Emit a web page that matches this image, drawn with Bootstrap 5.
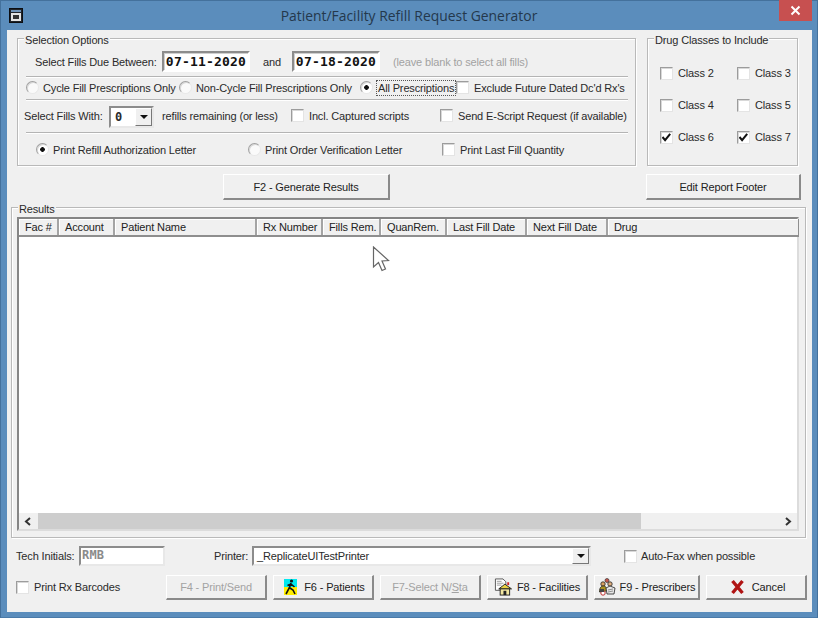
<!DOCTYPE html>
<html lang="en">
<head>
<meta charset="utf-8">
<title>Patient/Facility Refill Request Generator</title>
<link rel="stylesheet" href="https://cdn.jsdelivr.net/npm/bootstrap@5.3.0/dist/css/bootstrap.min.css">
<style>
html,body{margin:0;height:618px;overflow:hidden;background:#5b8dbc}
body{font-family:"Liberation Sans",Arial,sans-serif;font-size:11px;letter-spacing:-.15px;line-height:14px;color:#2a2a2a}
.win{width:818px;height:618px;border:1px solid #44719c;border-bottom-color:#4a7aa8;background:#5b8dbc}
.tbar{height:29px;position:relative;padding-left:8px}
.wicon{margin-top:7px}
.ttl{flex:1;text-align:center;font-family:"Open Sans","Noto Sans",sans-serif;font-size:13.9px;letter-spacing:0;line-height:30px;color:#24384c;padding-right:22px}
.closex{position:absolute;right:5px;top:-1px;width:33px;height:21px;background:#c75050;color:#fff;display:flex;align-items:center;justify-content:center}
.client{margin:0 5px 0 6px;height:582px;background:#f0f0f0;position:relative}
.toprow{padding:8px 0 0 10px;gap:11px}
.grp{border:1px solid #b9b9b9;box-shadow:inset 1px 1px 0 #fff,1px 1px 0 #fff;position:relative}
.grp-t{position:absolute;left:6px;top:-5px;background:#f0f0f0;padding:0 1px;line-height:13px;white-space:nowrap}
.sel{width:619px;height:128px;padding:12px 8px 0 8px}
.drug{width:151px;height:128px;padding:27px 0 0 12px}
.sline{height:21px}
.rw{white-space:nowrap}
.rw>span{flex:none}
.up1{padding-bottom:2px}
.sep{height:2px;border-top:1px solid #b4b4b4;border-bottom:1px solid #fff;width:602px}
.dt{width:88px;height:21px;background:#fff;border:2px solid;border-color:#8c8c8c #fff #fff #8c8c8c;font:700 13px/17px "DejaVu Sans Mono",monospace;color:#111;text-align:center;letter-spacing:.2px;box-shadow:inset 1px 1px 0 #cfcfcf}
.muted-h{color:#a2a2a2}
.form-check-input.wc{appearance:none;width:13px;height:13px;margin:0;flex:none;float:none;background:#fff;border:1px solid;border-color:#9c9c9c #e4e4e4 #e4e4e4 #9c9c9c;border-radius:0;box-shadow:inset 1px 1px 0 #d8d8d8}
.form-check-input.wr{border-radius:50%;background:#fafafa;border-color:#a0a0a0 #e8e8e8 #e8e8e8 #a0a0a0}
.form-check-input.wr:checked{background:radial-gradient(circle at center,#111 0,#111 2px,#fff 2.6px);border-color:#a0a0a0 #e8e8e8 #e8e8e8 #a0a0a0}
.form-check-input.wc:not(.wr):checked{background:#fff url("data:image/svg+xml,%3Csvg xmlns='http://www.w3.org/2000/svg' viewBox='0 0 13 13'%3E%3Cpath d='M2.5 6l2.6 3.2L10.2 2.8' fill='none' stroke='%23111' stroke-width='2'/%3E%3C/svg%3E") center/13px 13px no-repeat;border-color:#9c9c9c #e4e4e4 #e4e4e4 #9c9c9c}
.form-check-input.wc:focus{box-shadow:none}
.lab{display:flex;align-items:center;gap:5px;white-space:nowrap;flex:none}
.lab.rd{gap:4px}
.focus-box{outline:1px dotted #555;outline-offset:0;padding:0 1px}
.combo{height:22px;background:#fff;border:2px solid;border-color:#8c8c8c #e8e8e8 #e8e8e8 #8c8c8c;display:flex;align-items:center}
.combo b{font:700 12px/16px "DejaVu Sans Mono",monospace;flex:1;padding-left:4px}
.cbtn{width:17px;height:100%;background:#f0f0f0;border:1px solid;border-color:#fff #777 #777 #fff;display:flex;align-items:center;justify-content:center;flex:none}
.cbtn i{width:0;height:0;border:4px solid transparent;border-top:4px solid #111;border-bottom:0}
.btn.wb{--bs-btn-padding-x:0;--bs-btn-padding-y:0;--bs-btn-font-size:11px;--bs-btn-line-height:14px;--bs-btn-color:#222;--bs-btn-bg:#f0f0f0;--bs-btn-border-radius:0;--bs-btn-disabled-color:#a3a3a3;--bs-btn-disabled-bg:#f0f0f0;--bs-btn-disabled-opacity:1;background:#f0f0f0;color:#222;border:0;border-top:1px solid #fff;border-left:1px solid #fff;border-right:2px solid #8a8a8a;border-bottom:2px solid #8a8a8a;display:flex;align-items:center;justify-content:center;gap:5px;white-space:nowrap;font-family:inherit;letter-spacing:-.15px}
.btn.wb:disabled{color:#a3a3a3;background:#f0f0f0;border-top-color:#fff;border-left-color:#fff;border-right-color:#8a8a8a;border-bottom-color:#8a8a8a}
.actrow{height:26px;margin-top:8px}
.res{margin:7px 0 0 4px;width:795px;height:331px;padding:9px 5px 0 5px}
.lv{height:314px;width:782px;background:#fff;border:2px solid;border-color:#858585 #dcdcdc #dcdcdc #858585;display:flex;flex-direction:column;position:relative}
.table.lvt{table-layout:fixed;width:780px;margin:0;--bs-table-bg:#f0f0f0;--bs-table-color:#222}
.lvt th{font-weight:400;height:16px;padding:1px 0 0 6px;font-size:11px;line-height:15px;background:#f0f0f0;border:0;border-right:2px solid #a4a4a4;border-bottom:2px solid #8e8e8e;box-shadow:inset 1px 1px 0 #fff;white-space:nowrap;overflow:hidden;vertical-align:middle}
.lvt th:last-child{border-right:1px solid #8e8e8e}
.lvb{flex:1}
.hsb{height:16px;background:#f0f0f0;display:flex;align-items:center;flex:none}
.hsb .thumb{height:16px;width:603px;background:#cdcdcd;margin-left:1px}
.arr{width:18px;height:16px;display:flex;align-items:center;justify-content:center;flex:none}
.cur{position:absolute;left:353px;top:27px}
.frow1{height:20px;margin-top:8px;padding-left:9px}
.txt{width:86px;height:20px;background:#fff;border:2px solid;border-color:#8c8c8c #e8e8e8 #e8e8e8 #8c8c8c;padding-left:1px;color:#8b8b8b;font:700 12px/15px "DejaVu Sans Mono",monospace;letter-spacing:.2px}
.frow2{height:25px;margin-top:9px;padding-left:9px;gap:6px}
.fb{width:101px;height:25px}
</style>
</head>
<body>
<div class="win d-flex flex-column">
  <div class="tbar d-flex">
    <svg class="wicon" width="14" height="15" viewBox="0 0 14 15"><rect x=".5" y=".5" width="13" height="14" fill="#20242a" stroke="#0c0e12"/><rect x="2" y="2" width="10" height="2" fill="#6f93b8"/><rect x="2" y="5" width="10" height="8" fill="#e4e4e4"/><rect x="4" y="7" width="6" height="4" fill="#333"/></svg>
    <div class="ttl">Patient/Facility Refill Request Generator</div>
    <div class="closex"><svg width="11" height="11" viewBox="0 0 11 11"><path d="M1.5 1.5l8 8M9.5 1.5l-8 8" stroke="#fff" stroke-width="2"/></svg></div>
  </div>
  <div class="client">
    <div class="d-flex toprow">
      <div class="grp sel">
        <span class="grp-t">Selection Options</span>
        <div class="d-flex align-items-center sline rw">
          <span style="margin-left:9px;width:122px">Select Fills Due Between:</span>
          <span class="dt" style="margin-left:5px">07-11-2020</span>
          <span style="margin-left:13px;width:29px">and</span>
          <span class="dt">07-18-2020</span>
          <span class="muted-h" style="margin-left:13px">(leave blank to select all fills)</span>
        </div>
        <div class="sep mt-1"></div>
        <div class="d-flex align-items-center rw up1" style="height:21px">
          <label class="lab rd" style="width:153px"><input class="form-check-input wc wr" type="radio" name="a">Cycle Fill Prescriptions Only</label>
          <label class="lab rd" style="width:181px"><input class="form-check-input wc wr" type="radio" name="a">Non-Cycle Fill Prescriptions Only</label>
          <label class="lab rd" style="width:96px"><input class="form-check-input wc wr" type="radio" name="a" checked><span class="focus-box">All Prescriptions</span></label>
          <label class="lab"><input class="form-check-input wc" type="checkbox">Exclude Future Dated Dc'd Rx's</label>
        </div>
        <div class="sep"></div>
        <div class="d-flex align-items-center rw up1" style="height:31px">
          <span style="margin-left:-2px;width:85px">Select Fills With:</span>
          <span class="combo" style="width:45px;margin-top:2px"><b>0</b><span class="cbtn"><i></i></span></span>
          <span style="margin-left:8px;width:129px">refills remaining (or less)</span>
          <label class="lab" style="width:149px"><input class="form-check-input wc" type="checkbox">Incl. Captured scripts</label>
          <label class="lab"><input class="form-check-input wc" type="checkbox">Send E-Script Request (if available)</label>
        </div>
        <div class="sep"></div>
        <div class="d-flex align-items-center rw up1" style="height:33px">
          <label class="lab rd" style="width:212px;margin-left:10px"><input class="form-check-input wc wr" type="radio" name="b" checked>Print Refill Authorization Letter</label>
          <label class="lab rd" style="width:194px"><input class="form-check-input wc wr" type="radio" name="b">Print Order Verification Letter</label>
          <label class="lab"><input class="form-check-input wc" type="checkbox">Print Last Fill Quantity</label>
        </div>
      </div>
      <div class="grp drug">
        <span class="grp-t">Drug Classes to Include</span>
        <div class="row g-0" style="row-gap:18px;width:132px">
          <div class="col-7"><label class="lab"><input class="form-check-input wc" type="checkbox">Class 2</label></div>
          <div class="col-5"><label class="lab"><input class="form-check-input wc" type="checkbox">Class 3</label></div>
          <div class="col-7"><label class="lab"><input class="form-check-input wc" type="checkbox">Class 4</label></div>
          <div class="col-5"><label class="lab"><input class="form-check-input wc" type="checkbox">Class 5</label></div>
          <div class="col-7"><label class="lab"><input class="form-check-input wc" type="checkbox" checked>Class 6</label></div>
          <div class="col-5"><label class="lab"><input class="form-check-input wc" type="checkbox" checked>Class 7</label></div>
        </div>
      </div>
    </div>
    <div class="d-flex actrow">
      <button class="btn wb" style="width:167px;margin-left:216px">F2 - Generate Results</button>
      <button class="btn wb" style="width:155px;margin-left:256px">Edit Report Footer</button>
    </div>
    <div class="grp res">
      <span class="grp-t">Results</span>
      <div class="lv">
        <table class="table lvt">
          <colgroup><col style="width:39px"><col style="width:56px"><col style="width:142px"><col style="width:66px"><col style="width:58px"><col style="width:66px"><col style="width:80px"><col style="width:81px"><col></colgroup>
          <thead><tr><th>Fac #</th><th>Account</th><th>Patient Name</th><th>Rx Number</th><th>Fills Rem.</th><th>QuanRem.</th><th>Last Fill Date</th><th>Next Fill Date</th><th>Drug</th></tr></thead>
        </table>
        <div class="lvb"></div>
        <div class="hsb">
          <span class="arr"><svg width="8" height="9" viewBox="0 0 8 9"><path d="M6 1L2 4.5 6 8" fill="none" stroke="#333" stroke-width="2"/></svg></span>
          <span class="thumb"></span>
          <span class="flex-grow-1"></span>
          <span class="arr"><svg width="8" height="9" viewBox="0 0 8 9"><path d="M2 1l4 3.5L2 8" fill="none" stroke="#333" stroke-width="2"/></svg></span>
        </div>
        <svg class="cur" width="18" height="26" viewBox="0 0 18 26"><path d="M1.5 1v20l5-4.5 3.5 8 3.5-1.5-3.5-8 6.5-.5z" fill="#fff" stroke="#666" stroke-width="1.2"/></svg>
      </div>
    </div>
    <div class="d-flex align-items-center frow1 rw">
      <span style="width:63px">Tech Initials:</span>
      <span class="txt">RMB</span>
      <span style="margin-left:49px;width:38px">Printer:</span>
      <span class="combo" style="width:339px;height:20px;padding-left:3px"><span class="flex-grow-1">_ReplicateUITestPrinter</span><span class="cbtn"><i></i></span></span>
      <label class="lab" style="margin-left:33px;gap:4px"><input class="form-check-input wc" type="checkbox">Auto-Fax when possible</label>
    </div>
    <div class="d-flex align-items-center frow2 rw">
      <label class="lab up1" style="width:144px;padding-bottom:1px"><input class="form-check-input wc" type="checkbox">Print Rx Barcodes</label>
      <button class="btn wb fb" disabled>F4 - Print/Send</button>
      <button class="btn wb fb" style="gap:7px;padding-left:3px"><svg width="13" height="16" viewBox="0 0 13 16"><rect width="13" height="8" fill="#00e8f0"/><rect y="8" width="13" height="8" fill="#ffee00"/><circle cx="7.5" cy="2" r="1.6" fill="#111"/><path d="M7 4L5.500 8.500 2 15M6 9l3 2 2 4M7 5L3.500 6.500M7 5l3.500 3" fill="none" stroke="#111" stroke-width="1.6"/></svg>F6 - Patients</button>
      <button class="btn wb fb" disabled><span>F7-Select N/<u>S</u>ta</span></button>
      <button class="btn wb fb"><svg width="18" height="18" viewBox="0 0 19 18"><path d="M1.500.5h8l3 3v9h-11z" fill="#fff" stroke="#555"/><path d="M3 3h5M3 5h7M3 7h5" stroke="#999"/><path d="M5 11l6.500-5 7 5z" fill="#e8d040" stroke="#222"/><rect x="6.500" y="11" width="10" height="6.500" fill="#f2e6a0" stroke="#222"/><rect x="10" y="13" width="3" height="4.500" fill="#222"/><rect x="14" y="4" width="2" height="3" fill="#d02020"/></svg>F8 - Facilities</button>
      <button class="btn wb" style="width:106px;height:25px;gap:4px"><svg width="18" height="18" viewBox="0 0 18 18"><circle cx="9" cy="2.500" r="2" fill="#c8554a" stroke="#333" stroke-width=".7"/><circle cx="5" cy="6" r="2.200" fill="#d8a060" stroke="#222" stroke-width=".8"/><path d="M1.500 14c0-5 2-6 4-6s3 1 3 5z" fill="#a89020" stroke="#222" stroke-width=".8"/><circle cx="12" cy="6" r="2.200" fill="#e0b080" stroke="#222" stroke-width=".8"/><path d="M8 10l4-2 5 2-1 6-7 0z" fill="#e8e8e8" stroke="#222" stroke-width=".8"/><circle cx="5" cy="15" r="2.200" fill="#fff" stroke="#c03030"/><path d="M2 11h4v3H2z" fill="#444"/><path d="M10 12l5-1M10 14l5-1" stroke="#777" stroke-width=".8"/></svg>F9 - Prescribers</button>
      <button class="btn wb fb" style="gap:7px;padding-left:3px"><svg width="15" height="16" viewBox="0 0 15 16"><path d="M2.500 2l10 12M12.500 2l-10 12" fill="none" stroke="#b01414" stroke-width="3.400"/></svg>Cancel</button>
    </div>
  </div>
</div>
<script src="https://cdn.jsdelivr.net/npm/bootstrap@5.3.0/dist/js/bootstrap.bundle.min.js"></script>
</body>
</html>
